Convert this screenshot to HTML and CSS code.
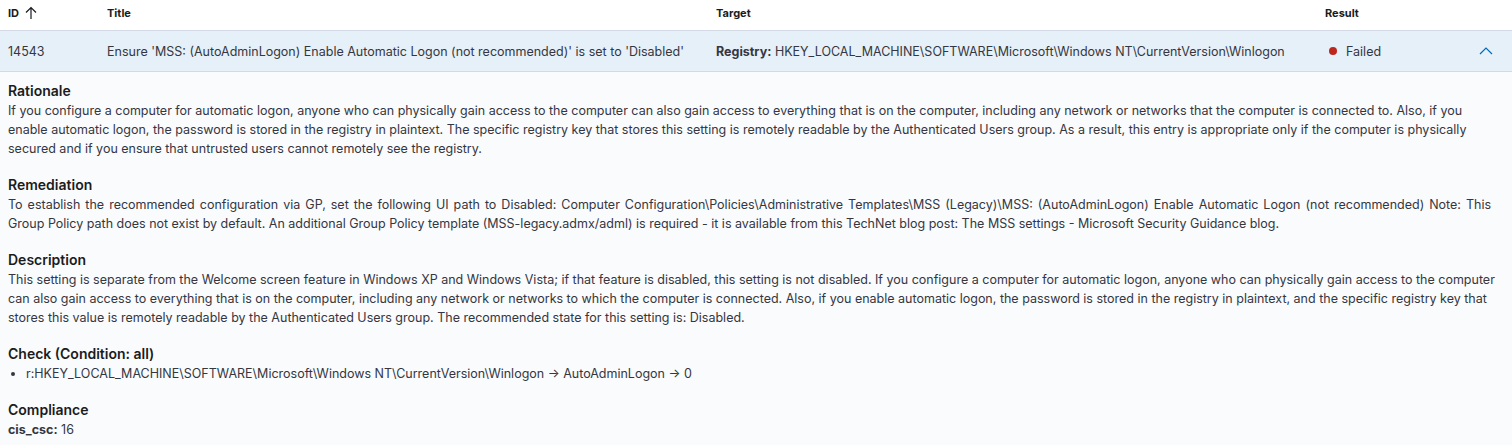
FILE: index.html
```html
<!DOCTYPE html>
<html>
<head>
<meta charset="utf-8">
<link rel="stylesheet" href="styles.css">
</head>
<body>
<div class="table">
  <div class="row head">
    <div class="cell c-id">ID <svg class="sort" width="12" height="14" viewBox="0 0 12 14"><path d="M6 13V1.5M1 6.5L6 1.5L11 6.5" fill="none" stroke="#1a1c21" stroke-width="1.2"/></svg></div>
    <div class="cell c-title">Title</div>
    <div class="cell c-target">Target</div>
    <div class="cell c-result">Result</div>
    <div class="cell c-exp"></div>
  </div>
  <div class="row item">
    <div class="cell c-id">14543</div>
    <div class="cell c-title">Ensure 'MSS: (AutoAdminLogon) Enable Automatic Logon (not recommended)' is set to 'Disabled'</div>
    <div class="cell c-target"><b>Registry:</b> HKEY_LOCAL_MACHINE\SOFTWARE\Microsoft\Windows NT\CurrentVersion\Winlogon</div>
    <div class="cell c-result"><span class="dot"></span>Failed</div>
    <div class="cell c-exp"><svg width="14" height="8" viewBox="0 0 14 8"><path d="M1 7L7 1L13 7" fill="none" stroke="#006bb8" stroke-width="1.2"/></svg></div>
  </div>
  <div class="details">
    <section class="sec">
      <h3>Rationale</h3>
      <p>If you configure a computer for automatic logon, anyone who can physically gain access to the computer can also gain access to everything that is on the computer, including any network or networks that the computer is connected to. Also, if you enable automatic logon, the password is stored in the registry in plaintext. The specific registry key that stores this setting is remotely readable by the Authenticated Users group. As a result, this entry is appropriate only if the computer is physically secured and if you ensure that untrusted users cannot remotely see the registry.</p>
    </section>
    <section class="sec">
      <h3>Remediation</h3>
      <p><span class="wide">To establish the recommended configuration via GP, set the following UI path to Disabled: Computer Configuration\Policies\Administrative Templates\MSS (Legacy)\MSS: (AutoAdminLogon) Enable Automatic Logon (not recommended) Note: This</span> Group Policy path does not exist by default. An additional Group Policy template (MSS-legacy.admx/adml) is required - it is available from this TechNet blog post: The MSS settings - Microsoft Security Guidance blog.</p>
    </section>
    <section class="sec">
      <h3>Description</h3>
      <p>This setting is separate from the Welcome screen feature in Windows XP and Windows Vista; if that feature is disabled, this setting is not disabled. If you configure a computer for automatic logon, anyone who can physically gain access to the computer can also gain access to everything that is on the computer, including any network or networks to which the computer is connected. Also, if you enable automatic logon, the password is stored in the registry in plaintext, and the specific registry key that stores this value is remotely readable by the Authenticated Users group. The recommended state for this setting is: Disabled.</p>
    </section>
    <section class="sec">
      <h3>Check (Condition: all)</h3>
      <ul><li>r:HKEY_LOCAL_MACHINE\SOFTWARE\Microsoft\Windows NT\CurrentVersion\Winlogon → AutoAdminLogon → 0</li></ul>
    </section>
    <section class="sec">
      <h3>Compliance</h3>
      <p><b>cis_csc:</b> 16</p>
    </section>
  </div>
</div>
</body>
</html>
```
FILE: styles.css
```css
* { box-sizing: border-box; }
body {
  margin: 0;
  font-family: Inter, "Noto Sans", sans-serif;
  color: #343741;
  background: #fff;
}
.table { width: 1512px; }
.row {
  display: grid;
  grid-template-columns: 99px 609px 609px 1fr 56px;
  align-items: center;
}
.cell { padding: 0 8px; white-space: nowrap; }
.head { height: 31px; border-bottom: 1px solid #d3dae6; padding-bottom: 4px; }
.head .cell { font-size: 11px; font-weight: 700; color: #1a1c21; }
.head .c-id { display: flex; align-items: center; gap: 6px; }
.sort { margin-top: -1px; }
.item {
  height: 41px;
  background: #e6f0f8;
  border-bottom: 1px solid #d3dae6;
  font-size: 12.5px;
}
.item b { font-weight: 700; }
.c-result { display: flex; align-items: center; }
.dot { width: 8px; height: 8px; border-radius: 50%; background: #bd271e; margin: 0 9px 0 4px; }
.c-exp { display: flex; justify-content: flex-end; padding-right: 19px; }
.details {
  background: #fafbfd;
  padding: 8px 8px 6px;
  font-size: 12.5px;
  line-height: 19px;
}
.sec + .sec { margin-top: 16px; }
h3 { margin: 0; font-size: 14px; line-height: 21px; font-weight: 600; color: #1a1c21; }
p { margin: 0; }
.wide { word-spacing: 1.5px; }
ul { margin: 0; padding-left: 18px; }
li { list-style: disc; }
b { font-weight: 700; }
```
